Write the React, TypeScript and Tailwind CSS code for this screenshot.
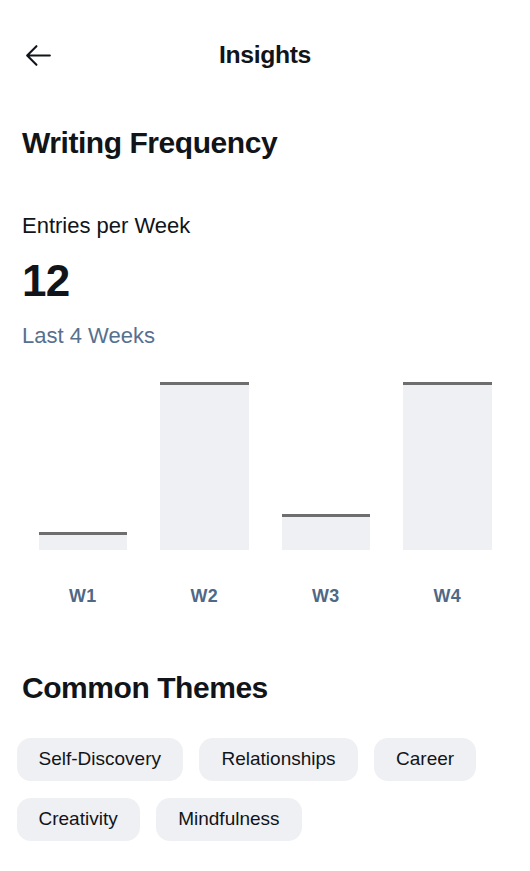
import React from "react";

const bars = [
  { label: "W1", h: 18 },
  { label: "W2", h: 168 },
  { label: "W3", h: 36 },
  { label: "W4", h: 168 },
];

const themes = ["Self-Discovery", "Relationships", "Career", "Creativity", "Mindfulness"];

export default function App() {
  return (
    <div
      className="min-h-screen w-full bg-white text-[#111418]"
      style={{ fontFamily: '"Liberation Sans", Arial, sans-serif' }}
    >
      <div className="flex items-center justify-between p-[22px] pb-[11px]">
        <div className="flex h-[66px] w-[66px] shrink-0 items-center">
          <svg width="33" height="33" viewBox="0 0 256 256" fill="currentColor">
            <path d="M224,128a8,8,0,0,1-8,8H59.31l58.35,58.34a8,8,0,0,1-11.32,11.32l-72-72a8,8,0,0,1,0-11.32l72-72a8,8,0,0,1,11.32,11.32L59.31,120H216A8,8,0,0,1,224,128Z" />
          </svg>
        </div>
        <h2 className="flex-1 pr-[66px] text-center text-[24.75px] font-bold leading-tight tracking-[-0.015em]">
          Insights
        </h2>
      </div>

      <h2 className="px-[22px] pb-[15.5px] pt-[25px] text-[30px] font-bold leading-tight tracking-[-0.015em]">
        Writing Frequency
      </h2>

      <div className="flex flex-wrap gap-[22px] px-[22px] py-[32px]">
        <div className="flex flex-1 flex-col gap-[11px]">
          <p className="text-[22px] font-medium leading-normal">Entries per Week</p>
          <p className="truncate text-[44px] font-bold leading-tight tracking-[-0.015em]">12</p>
          <div className="flex gap-[5.5px]">
            <p className="text-[22px] font-normal leading-normal text-[#56708f]">Last 4 Weeks</p>
          </div>
          <div className="grid min-h-[247px] grid-flow-col grid-rows-[1fr_auto] items-end justify-items-center gap-[33px] px-[16.5px]">
            {bars.map((b) => (
              <React.Fragment key={b.label}>
                <div
                  className="w-full border-t-[3px] border-[#6e6e6e] bg-[#eff0f4]"
                  style={{ height: b.h }}
                />
                <p className="text-[17.9px] font-bold leading-normal tracking-[0.015em] text-[#4f6886]">
                  {b.label}
                </p>
              </React.Fragment>
            ))}
          </div>
        </div>
      </div>

      <h2 className="px-[22px] pb-[14.5px] pt-[27px] text-[30px] font-bold leading-tight tracking-[-0.015em]">
        Common Themes
      </h2>

      <div className="flex flex-wrap gap-x-[16.5px] gap-y-[17px] p-[16.5px] pr-[22px]">
        {themes.map((t) => (
          <div
            key={t}
            className="flex h-[43px] shrink-0 items-center justify-center rounded-[14px] bg-[#eff0f4] px-[22px]"
          >
            <p className="text-[19px] font-medium leading-normal text-[#111418]">{t}</p>
          </div>
        ))}
      </div>
    </div>
  );
}
